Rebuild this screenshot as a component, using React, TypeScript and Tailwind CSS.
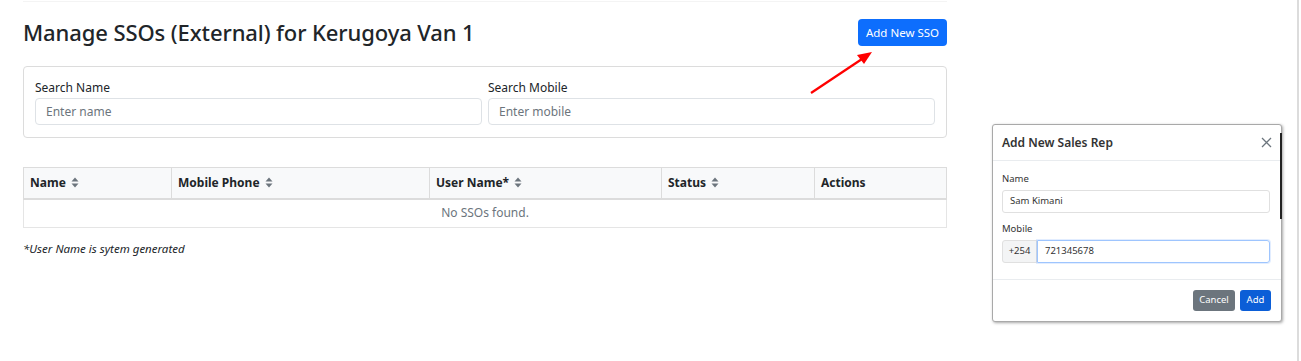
import React from "react";

const font = { fontFamily: '"Noto Sans", "Open Sans", sans-serif' };

function SortIcon() {
  return (
    <svg width="8" height="11" viewBox="0 0 8 11" className="inline-block ml-[5px] align-[-1px]">
      <path d="M4 0.5 L7.5 4.5 H0.5 Z" fill="#6c757d" />
      <path d="M4 10.5 L7.5 6.5 H0.5 Z" fill="#6c757d" />
    </svg>
  );
}

export default function App() {
  return (
    <div className="relative w-[1301px] h-[361px] bg-white overflow-hidden text-[#212529]" style={font}>
      <div className="absolute right-[2px] top-0 h-full w-[2px] bg-[#dcdcdc]" />
      <div className="w-[924px] ml-[23px]">
        <div className="h-[2px] border-t border-[#f4f4f4] mt-[1px]" />
        <div className="flex items-start justify-between pt-[16px]">
          <h3 className="text-[22px] font-medium leading-[28px] mt-[-1px] tracking-[-0.1px]">
            Manage SSOs (External) for Kerugoya Van 1
          </h3>
          <button className="bg-[#0d6efd] text-white text-[11.5px] rounded-[4px] h-[27px] w-[89px] whitespace-nowrap leading-none flex items-center justify-center">
            Add New SSO
          </button>
        </div>
        <div className="mt-[20px] border border-[#dcdcdc] rounded-[4px] px-[11px] pt-[13px] pb-[11px] flex gap-[6px] h-[72px]">
          <div className="flex-1">
            <div className="text-[12px] leading-[16px] mb-[2px]">Search Name</div>
            <div className="h-[27px] border border-[#dee2e6] rounded-[4px] px-[10px] flex items-center text-[12px] text-[#6c757d]">
              Enter name
            </div>
          </div>
          <div className="flex-1">
            <div className="text-[12px] leading-[16px] mb-[2px]">Search Mobile</div>
            <div className="h-[27px] border border-[#dee2e6] rounded-[4px] px-[10px] flex items-center text-[12px] text-[#6c757d]">
              Enter mobile
            </div>
          </div>
        </div>
        <table className="mt-[29px] w-full border-collapse text-[12px]">
          <thead>
            <tr className="bg-[#f8f9fa] h-[31px]">
              <th className="border border-[#dcdcdc] border-b-2 text-left font-bold px-[6px] w-[148px]">Name<SortIcon /></th>
              <th className="border border-[#dcdcdc] border-b-2 text-left font-bold px-[6px] w-[258px]">Mobile Phone<SortIcon /></th>
              <th className="border border-[#dcdcdc] border-b-2 text-left font-bold px-[6px] w-[232px]">User Name*<SortIcon /></th>
              <th className="border border-[#dcdcdc] border-b-2 text-left font-bold px-[6px] w-[153px]">Status<SortIcon /></th>
              <th className="border border-[#dcdcdc] border-b-2 text-left font-bold px-[6px]">Actions</th>
            </tr>
          </thead>
          <tbody>
            <tr className="h-[29px]">
              <td colSpan={5} className="border border-[#e5e5e5] text-center text-[#6c757d]">No SSOs found.</td>
            </tr>
          </tbody>
        </table>
        <div className="mt-[12px] text-[11.5px] italic">*User Name is sytem generated</div>
      </div>

      <svg className="absolute left-[805px] top-[45px]" width="75" height="55" viewBox="0 0 75 55">
        <line x1="6" y1="48" x2="60" y2="12" stroke="#ff0000" strokeWidth="2.2" />
        <path d="M67 7 L52 10 L59 19 Z" fill="#ff0000" />
      </svg>

      <div className="absolute left-[992px] top-[124px] w-[290px] h-[198px] bg-white border border-[#a9a9a9] rounded-[3px] shadow-[1px_1px_3px_rgba(0,0,0,0.35)] flex flex-col">
        <div className="absolute right-[-1px] top-[8px] h-[86px] w-[2px] bg-[#222]" />
        <div className="h-[36px] border-b border-[#e9ecef] flex items-center justify-between pl-[9px] pr-[9px]">
          <span className="text-[12px] font-semibold text-[#333]">Add New Sales Rep</span>
          <svg width="11" height="11" viewBox="0 0 11 11">
            <path d="M1 1 L10 10 M10 1 L1 10" stroke="#6c757d" strokeWidth="1.3" />
          </svg>
        </div>
        <div className="px-[9px] pt-[12px] flex-1 border-b border-[#e9ecef]">
          <div className="text-[9.5px] leading-[12px] mb-[5px] text-[#333]">Name</div>
          <div className="h-[23px] w-[268px] border border-[#e0e0e0] rounded-[3px] px-[7px] flex items-center text-[9.5px] text-[#333]">Sam Kimani</div>
          <div className="text-[9.5px] leading-[12px] mt-[10px] mb-[5px] text-[#333]">Mobile</div>
          <div className="flex h-[23px] w-[268px]">
            <div className="w-[35px] bg-[#f3f4f5] border border-[#e0e0e0] rounded-l-[3px] flex items-center justify-center text-[9.5px] text-[#333]">+254</div>
            <div className="flex-1 border-[1.5px] border-[#9ec5fe] rounded-r-[3px] shadow-[0_0_0_1px_rgba(13,110,253,0.12)] px-[7px] flex items-center text-[9.5px] text-[#333]">721345678</div>
          </div>
        </div>
        <div className="h-[41px] flex items-center justify-end gap-[5px] pr-[10px]">
          <button className="w-[42px] h-[21px] bg-[#6c757d] text-white text-[9.5px] rounded-[3px]">Cancel</button>
          <button className="w-[31px] h-[21px] bg-[#0b5ed7] text-white text-[9.5px] rounded-[3px]">Add</button>
        </div>
      </div>
    </div>
  );
}
